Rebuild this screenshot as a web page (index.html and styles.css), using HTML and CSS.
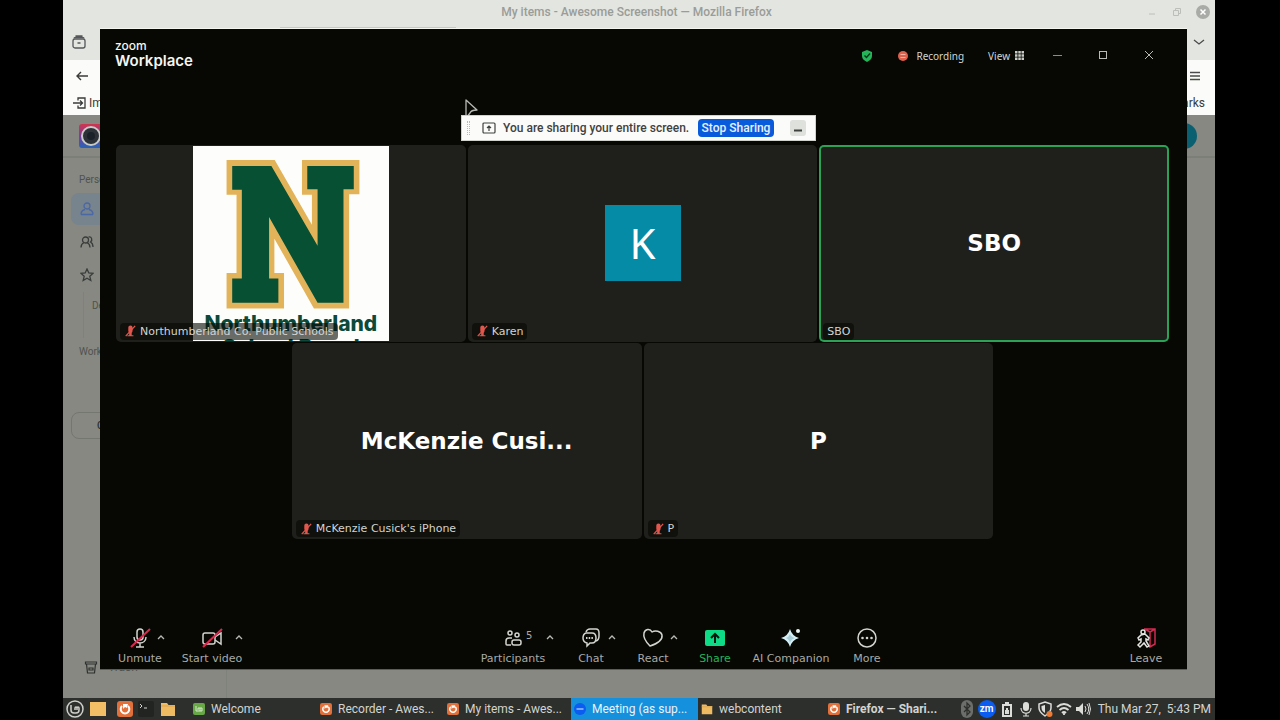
FILE: index.html
```html
<!DOCTYPE html>
<html lang="en">

<head>
    <meta charset="UTF-8">
    <meta name="viewport" content="width=device-width, initial-scale=1.0">
    <title>Desktop</title>
    <link rel="stylesheet" href="styles.css">
</head>

<body>
    <!-- shared icons -->
    <svg class="defs" width="0" height="0">
        <symbol id="mic-off" viewBox="0 0 14 16">
            <path d="M5 4a2.500 2.500 0 0 1 5 0v4a2.500 2.500 0 0 1-5 0z M6 10h3v3h2v1H4v-1h2z" fill="#e0574d" />
            <path d="M2 14L13 2" stroke="#e0574d" stroke-width="1.500" />
        </symbol>
        <symbol id="chevron" viewBox="0 0 10 10">
            <path d="M2 7l3-3 3 3" fill="none" stroke="#b9bab6" stroke-width="1.300" />
        </symbol>
        <symbol id="firefox" viewBox="0 0 16 16">
            <rect width="16" height="16" rx="3" fill="#e2703a" />
            <path d="M5 5a4.300 4.300 0 1 0 6 0" fill="none" stroke="#fff" stroke-width="2" />
            <path d="M6 3l5 0-1 4-2-1-2 2z" fill="#fff" />
        </symbol>
        <symbol id="folder" viewBox="0 0 16 16">
            <path d="M1 2h6l1.500 2H15v11H1z" fill="#eebb62" />
            <path d="M1 5h14" stroke="#d9a34c" />
        </symbol>
    </svg>

    <div class="desktop">
        <!-- browser behind the meeting -->
        <div class="browser">
            <div class="titlebar">
                <span class="title">My items - Awesome Screenshot — Mozilla Firefox</span>
                <div class="winbtns">
                    <svg width="12" height="12" viewBox="0 0 12 12"><path d="M3 8h6" stroke="#bcbeba" /></svg>
                    <svg width="12" height="12" viewBox="0 0 12 12"><path d="M2.500 4.500h5v5h-5zM4.500 4V2.500h5v5H8" fill="none" stroke="#bcbeba" /></svg>
                    <svg width="14" height="14" viewBox="0 0 14 14"><circle cx="7" cy="7" r="7" fill="#a9aba7" /><path d="M4.500 4.500l5 5m0-5l-5 5" stroke="#fff" stroke-width="1.500" /></svg>
                </div>
            </div>
            <div class="tabstrip">
                <svg width="16" height="16" viewBox="0 0 16 16" fill="none" stroke="#55575a" stroke-width="1.300"><rect x="2" y="5" width="12" height="9" rx="2" /><path d="M3 4.500c0-1 .5-1 1.500-1h7c1 0 1.500 0 1.500 1M4.500 2h7M6.500 9h3" /></svg>
                <div class="tab"></div>
                <svg class="end" width="12" height="12" viewBox="0 0 12 12"><path d="M1 4l5 4 5-4" fill="none" stroke="#4a4b4a" stroke-width="1.300" /></svg>
            </div>
            <div class="navbar">
                <svg width="14" height="14" viewBox="0 0 14 14"><path d="M13 7H2m4-4L2 7l4 4" fill="none" stroke="#3a3b3a" stroke-width="1.400" /></svg>
                <svg class="end" width="12" height="12" viewBox="0 0 12 12"><path d="M1 2.500h10M1 6h10M1 9.500h10" stroke="#4a4b4a" stroke-width="1.300" /></svg>
            </div>
            <div class="bookmarks">
                <svg width="14" height="12" viewBox="0 0 14 12"><path d="M5 3.500V1h7v10H5V8.500M0 6h9M7 3.500L9.500 6 7 8.500" fill="none" stroke="#3a3b3a" stroke-width="1.300" /></svg>
                <span>Import bookmarks</span>
                <span class="end">Other Bookmarks</span>
            </div>
            <div class="page">
                <div class="page-head">
                    <svg width="24" height="24" viewBox="0 0 24 24">
                        <defs>
                            <linearGradient id="lens" x1="0" y1="0" x2="0" y2="1"><stop offset="0" stop-color="#d0354f" /><stop offset=".5" stop-color="#7a3d9d" /><stop offset="1" stop-color="#2466b8" /></linearGradient>
                        </defs>
                        <rect width="24" height="24" rx="3" fill="url(#lens)" />
                        <circle cx="12" cy="12" r="9" fill="#2c3238" stroke="#c9cbc8" stroke-width="2" />
                        <circle cx="12" cy="12" r="4" fill="#1b2129" />
                    </svg>
                    <span class="account"></span>
                </div>
                <div class="sidebar">
                    <p class="group">Personal</p>
                    <a class="item active" href="#" aria-label="My items"><svg width="14" height="14" viewBox="0 0 14 14" fill="none" stroke="#4a68a5" stroke-width="1.300"><circle cx="7" cy="4" r="3" /><path d="M1 12.500c0-3 2-4.500 4-5M13 12.500c0-3-2-4.500-4-5M1 12.500h12" /></svg></a>
                    <a class="item" href="#" aria-label="Shared"><svg width="14" height="14" viewBox="0 0 14 14" fill="none" stroke="#3a3c3b" stroke-width="1.300"><circle cx="5.500" cy="5" r="3" /><path d="M1 12.500c0-2.500 1-4 3-5M10 12.500c0-2.500-1-4-3-5M8.500 2c3-1 4.500 3 2 5 2 1 2.500 3 2.500 5" /></svg></a>
                    <a class="item" href="#" aria-label="Starred"><svg width="14" height="14" viewBox="0 0 14 14" fill="none" stroke="#3a3c3b" stroke-width="1.300"><path d="M7 1l1.800 4 4.200.4-3.200 2.900 1 4.200L7 10.300l-3.800 2.200 1-4.200L1 5.400 5.200 5z" /></svg></a>
                    <p class="drop">Default</p>
                    <p class="group">Workspace</p>
                    <button class="create" type="button">Create</button>
                    <div class="trash">
                        <svg width="14" height="14" viewBox="0 0 14 14" fill="none" stroke="#2f3130" stroke-width="1.200"><path d="M1.500 2h11v2h-11zM2.500 4l1 9h7l1-9M5 8h4v2H5z" /></svg>
                        <span>Trash</span>
                    </div>
                </div>
            </div>
        </div>

        <!-- mouse pointer -->
        <svg class="pointer" width="16" height="22" viewBox="0 0 16 22"><path d="M2 1l11 10q-6 0-7 3l-4 5z" fill="#070803" stroke="#b8bab6" stroke-width="1.300" stroke-linejoin="round" /></svg>

        <!-- meeting window -->
        <main class="meeting">
            <header class="meeting-head">
                <div class="brand"><span class="brand-zoom">zoom</span><span class="brand-name">Workplace</span></div>
                <div class="status">
                    <svg width="12" height="14" viewBox="0 0 12 14"><path d="M6 1l5 2v4c0 3-2 4.500-5 6-3-1.500-5-3-5-6V3z" fill="#24b558" /><path d="M3.500 6.500l2 2 3.500-4" fill="none" stroke="#07351a" stroke-width="1.400" /></svg>
                    <span class="rec"><svg width="12" height="12" viewBox="0 0 12 12"><circle cx="6" cy="6" r="5" fill="#e0604c" /><path d="M3.500 4.500h5M3.500 7.500h5" stroke="#f4b2a6" /></svg>Recording</span>
                    <button class="view" type="button">View<svg width="9" height="9" viewBox="0 0 9 9" fill="#c9cac6"><path d="M0 0h2.500v2.500H0zM3.300 0h2.500v2.500H3.300zM6.500 0H9v2.500H6.500zM0 3.300h2.500v2.500H0zM3.300 3.300h2.500v2.500H3.300zM6.500 3.300H9v2.500H6.500zM0 6.500h2.500V9H0zM3.300 6.500h2.500V9H3.300zM6.500 6.500H9V9H6.500z" /></svg></button>
                </div>
                <div class="controls">
                    <button type="button" aria-label="Minimize"><svg width="10" height="10" viewBox="0 0 10 10"><path d="M1 5.500h9" stroke="#8b8c88" /></svg></button>
                    <button type="button" aria-label="Maximize"><svg width="10" height="10" viewBox="0 0 10 10"><rect x="1.500" y="1.500" width="7" height="7" fill="none" stroke="#b9bab6" /></svg></button>
                    <button type="button" aria-label="Close"><svg width="10" height="10" viewBox="0 0 10 10"><path d="M1 1l8 8m0-8L1 9" stroke="#b9bab6" /></svg></button>
                </div>
            </header>

            <section class="gallery">
                <div class="tile">
                    <div class="photo">
                        <svg class="emblem" viewBox="399 18 590 500">
                            <path fill="#e3b35a" d="M500 60H645L757 255V165H727V60H900V163H869V507H763L644 297V400H673V507H500V400H530V165H500z" />
                            <path fill="#075034" d="M517 78H635L774 318V148H743V78H883V148H852V490H774L628 232V417H656V490H517V417H546V150H517z" />
                        </svg>
                        <p class="school">Northumberland School Board</p>
                    </div>
                    <span class="label"><svg width="12" height="14"><use href="#mic-off" /></svg>Northumberland Co. Public Schools</span>
                </div>
                <div class="tile">
                    <div class="avatar">K</div>
                    <span class="label"><svg width="12" height="14"><use href="#mic-off" /></svg>Karen</span>
                </div>
                <div class="tile speaking">
                    <span class="name">SBO</span>
                    <span class="label">SBO</span>
                </div>
                <div class="tile">
                    <span class="name">McKenzie Cusi...</span>
                    <span class="label"><svg width="12" height="14"><use href="#mic-off" /></svg>McKenzie Cusick's iPhone</span>
                </div>
                <div class="tile">
                    <span class="name">P</span>
                    <span class="label"><svg width="12" height="14"><use href="#mic-off" /></svg>P</span>
                </div>
            </section>

            <footer class="toolbar">
                <div class="tools spaced">
                    <div class="tool">
                        <button class="tool-main" type="button">
                            <svg width="24" height="24" viewBox="0 0 24 24" fill="none" stroke="#d3d4d0" stroke-width="1.500"><rect x="9" y="3" width="6" height="11" rx="3" /><path d="M6 11c0 8 12 8 12 0M12 17v4M8 21h8" /><path d="M3 21L22 3" stroke="#e0284f" stroke-width="2" /></svg>
                            Unmute
                        </button>
                        <button class="more" type="button" aria-label="Audio options"><svg width="10" height="10"><use href="#chevron" /></svg></button>
                    </div>
                    <div class="tool medium">
                        <button class="tool-main" type="button">
                            <svg width="24" height="24" viewBox="0 0 24 24" fill="none" stroke="#d3d4d0" stroke-width="1.500"><rect x="3" y="7" width="12" height="11" rx="2" /><path d="M15 11l6-4v11l-6-4" /><path d="M3 21L22 3" stroke="#e0284f" stroke-width="2" /></svg>
                            Start video
                        </button>
                        <button class="more" type="button" aria-label="Video options"><svg width="10" height="10"><use href="#chevron" /></svg></button>
                    </div>
                </div>
                <div class="tools">
                    <div class="tool wide">
                        <button class="tool-main" type="button">
                            <svg width="24" height="24" viewBox="0 0 24 24" fill="none" stroke="#d3d4d0" stroke-width="1.500"><circle cx="9" cy="7" r="2" /><circle cx="16" cy="9" r="2" /><path d="M10 19H6q-1 0-1-1v-3q0-3 3-3h3" /><rect x="11" y="14" width="9" height="5" rx="2" /></svg>
                            Participants
                        </button>
                        <span class="count">5</span>
                        <button class="more" type="button" aria-label="Participant options"><svg width="10" height="10"><use href="#chevron" /></svg></button>
                    </div>
                    <div class="tool">
                        <button class="tool-main" type="button">
                            <svg width="24" height="24" viewBox="0 0 24 24" fill="none" stroke="#d3d4d0" stroke-width="1.500"><path d="M7 6q1-3 4-3h6q3 0 3 4v3q0 4-3 5" /><path d="M7 7h6q4 0 4 5t-4 5h-2l-3 3v-3q-4-1-4-5t3-5z" /><path d="M7 12h1.500m1.200 0h1.500m1.200 0h1.500" stroke-width="2" /></svg>
                            Chat
                        </button>
                        <button class="more" type="button" aria-label="Chat options"><svg width="10" height="10"><use href="#chevron" /></svg></button>
                    </div>
                    <div class="tool">
                        <button class="tool-main" type="button">
                            <svg width="24" height="24" viewBox="0 0 24 24" fill="none" stroke="#d3d4d0" stroke-width="1.500"><path d="M9 20C5 16 2 11 3 7c1-4 6-5 8-1 3-2 9-1 10 3 1 6-6 9-12 11z" stroke-linejoin="round" /></svg>
                            React
                        </button>
                        <button class="more" type="button" aria-label="Reactions"><svg width="10" height="10"><use href="#chevron" /></svg></button>
                    </div>
                    <div class="tool">
                        <button class="tool-main share" type="button">
                            <svg width="24" height="24" viewBox="0 0 24 24"><rect x="2" y="4" width="20" height="16" rx="2" fill="#0ddb85" /><path d="M12 17V8m-4 4l4-4 4 4" fill="none" stroke="#06170e" stroke-width="2" /></svg>
                            Share
                        </button>
                    </div>
                    <div class="tool large">
                        <button class="tool-main" type="button">
                            <svg width="24" height="24" viewBox="0 0 24 24"><path d="M11 3q2 7 9 9-7 2-9 9-2-7-9-9 7-2 9-9z" fill="#d4eef4" /><path d="M11 8q1 3 5 4-4 1-5 5-1-4-4-5 3-1 4-4z" fill="#a5ccd6" /><circle cx="19" cy="5" r="2" fill="#e8f4f4" /></svg>
                            AI Companion
                        </button>
                    </div>
                    <div class="tool">
                        <button class="tool-main" type="button">
                            <svg width="24" height="24" viewBox="0 0 24 24"><circle cx="12" cy="12" r="9" fill="none" stroke="#d3d4d0" stroke-width="1.500" /><g fill="#d3d4d0"><circle cx="7.500" cy="12" r="1.300" /><circle cx="12" cy="12" r="1.300" /><circle cx="16.500" cy="12" r="1.300" /></g></svg>
                            More
                        </button>
                    </div>
                </div>
                <div class="tool">
                    <button class="tool-main" type="button">
                        <svg width="24" height="24" viewBox="0 0 24 24" fill="none"><path d="M10 3h11v15l-5 3V6l5-3M16 6l-5-3" stroke="#d42a52" stroke-width="1.500" /><g stroke="#e4e5e1" stroke-width="1.500"><circle cx="9" cy="6" r="2" /><path d="M7 9l-3 3 1 2 2-1v3l-3 3 2 2 4-4 3 4 2-1-3-5v-2l2 1 1-2-4-4z" /></g></svg>
                        Leave
                    </button>
                </div>
            </footer>
        </main>

        <!-- screen sharing bar -->
        <div class="sharebar">
            <span class="grip"></span>
            <svg width="14" height="12" viewBox="0 0 14 12" fill="none" stroke="#3f413f" stroke-width="1.200"><rect x="1" y="1" width="12" height="10" rx="1" /><path d="M7 9V4M5 6l2-2 2 2" /></svg>
            <span>You are sharing your entire screen.</span>
            <button class="stop" type="button">Stop Sharing</button>
            <button class="hide" type="button" aria-label="Minimize"><svg width="8" height="8" viewBox="0 0 8 8"><path d="M0 6.500h8" stroke="#3f413f" stroke-width="2" /></svg></button>
        </div>

        <!-- bottom panel -->
        <nav class="panel">
            <div class="launchers">
                <svg width="18" height="18" viewBox="0 0 18 18" fill="none" stroke="#cfd0cc"><circle cx="9" cy="9" r="8" stroke-width="1.500" /><path d="M5 5v5q0 3 3 3h2q3 0 3-3V8q0-1-1-1t-1 1v2M11 8q0-1-1-1T9 8v2" stroke-width="1.500" /></svg>
                <svg width="18" height="18" viewBox="0 0 18 18"><rect x="1" y="2" width="16" height="14" fill="#f2bf66" /></svg>
                <svg class="after" width="16" height="16"><use href="#firefox" /></svg>
                <svg width="16" height="16" viewBox="0 0 16 16"><rect width="16" height="16" rx="2" fill="#222421" /><path d="M2 3l2 2-2 2M6 7h3" fill="none" stroke="#d3d4d0" /></svg>
                <svg width="18" height="16"><use href="#folder" /></svg>
            </div>
            <div class="tasks">
                <a href="#"><svg width="12" height="12" viewBox="0 0 12 12"><rect width="12" height="12" rx="2" fill="#69a847" /><path d="M3 3v5h6V5H5v2m2-2v3" fill="none" stroke="#d8eccb" /></svg><span>Welcome</span></a>
                <a href="#"><svg width="12" height="12"><use href="#firefox" /></svg><span>Recorder - Awes...</span></a>
                <a href="#"><svg width="12" height="12"><use href="#firefox" /></svg><span>My items - Awes...</span></a>
                <a class="current" href="#"><svg width="12" height="12" viewBox="0 0 12 12"><circle cx="6" cy="6" r="6" fill="#0b5cf0" /><path d="M2.500 6h7" stroke="#9cc2ff" stroke-width="1.500" /></svg><span>Meeting (as sup...</span></a>
                <a href="#"><svg width="12" height="12"><use href="#folder" /></svg><span>webcontent</span></a>
                <a class="alert" href="#"><svg width="12" height="12"><use href="#firefox" /></svg><span>Firefox — Shari...</span></a>
            </div>
            <div class="tray">
                <svg width="16" height="18" viewBox="0 0 16 18"><rect x="2" y="0" width="12" height="18" rx="6" fill="#6c6e6b" /><path d="M5 6l6 6-3 3V3l3 3-6 6" fill="none" stroke="#2d2f2c" stroke-width="1.300" /></svg>
                <span class="zm">zm</span>
                <svg width="16" height="18" viewBox="0 0 16 18"><path d="M6 2h4v2h3v13H3V4h3z" fill="#dcddd9" /><path d="M5 6h6v9H5z" fill="#2d2f2c" /><path d="M6 10h4v4H6zM7 8h2v2H7z" fill="#dcddd9" /></svg>
                <svg width="16" height="18" viewBox="0 0 16 18"><rect x="5" y="2" width="6" height="9" rx="3" fill="#dcddd9" /><path d="M3 8c0 7 10 7 10 0M8 13v3M5 16h6" fill="none" stroke="#dcddd9" stroke-width="1.200" /></svg>
                <svg width="16" height="18" viewBox="0 0 16 18"><path d="M8 2l6 2v4c0 4-3 6-6 8-3-2-6-4-6-8V4z" fill="#2d2f2c" stroke="#dcddd9" stroke-width="1.500" /><path d="M8 5v8c-2-1-3.500-3-3.500-5V6z" fill="#dcddd9" /><circle cx="12.500" cy="14" r="3" fill="#ee7a33" /></svg>
                <svg width="16" height="18" viewBox="0 0 16 18" fill="none" stroke="#dcddd9" stroke-width="1.800"><path d="M1 7q7-6 14 0M3.500 10q4.500-4 9 0M6 13q2-2 4 0" /><path d="M8 13v2" /></svg>
                <svg width="16" height="18" viewBox="0 0 16 18"><path d="M1 7h3l4-4v12l-4-4H1z" fill="#dcddd9" /><path d="M10 6q2 3 0 6M12 4q3.500 5 0 10M14 3q3 6 0 12" fill="none" stroke="#dcddd9" /></svg>
                <span class="clock">Thu Mar 27, &nbsp;5:43 PM</span>
            </div>
        </nav>
    </div>
</body>

</html>
```
FILE: styles.css
```css
* {
    box-sizing: border-box;
}

body {
    margin: 0;
    background: #000;
    font-family: "DejaVu Sans", sans-serif;
    font-size: 11px;
}

p {
    margin: 0;
}

svg {
    flex: none;
}

button {
    padding: 0;
    border: 0;
    background: none;
    color: inherit;
    font: inherit;
}

a {
    color: inherit;
    text-decoration: none;
}

.defs {
    position: absolute;
}

.desktop {
    position: relative;
    display: flex;
    flex-direction: column;
    min-height: 100vh;
    margin: 0 65px 0 63px;
    overflow: hidden;
}

/* browser */
.browser {
    flex: 1;
    display: flex;
    flex-direction: column;
    background: #e3e5e0;
    font-family: Roboto, sans-serif;
    font-size: 12px;
    color: #3a3b3a;
}

.titlebar {
    display: grid;
    grid-template-columns: 1fr auto 1fr;
    align-items: center;
    height: 24px;
    padding-right: 5px;
}

.title {
    grid-column: 2;
    color: #9a9c98;
    font-weight: 500;
}

.winbtns {
    display: flex;
    align-items: center;
    justify-content: flex-end;
    gap: 13px;
}

.tabstrip,
.navbar,
.bookmarks {
    display: flex;
    align-items: center;
}

.tabstrip {
    height: 36px;
    padding: 0 10px 0 8px;
}

.tab {
    align-self: flex-start;
    width: 176px;
    height: 32px;
    margin: 3px 0 0 193px;
    border-top: 1px solid #c6c8c3;
    background: #fbfcf9;
}

.end {
    margin-left: auto;
}

.navbar {
    height: 31px;
    padding: 0 14px 0 12px;
    background: #fbfcf9;
}

.bookmarks {
    height: 24px;
    gap: 2px;
    padding: 0 10px 0 10px;
    background: #fbfcf9;
}

.page {
    flex: 1;
    display: flex;
    flex-direction: column;
    background: #868881;
    font-size: 10px;
    color: #50524f;
}

.page-head {
    display: flex;
    align-items: center;
    justify-content: space-between;
    height: 43px;
    padding: 0 18px 0 16px;
    border-bottom: 2px solid #7c7e78;
}

.account {
    width: 26px;
    height: 26px;
    border-radius: 50%;
    background: #0a5f70;
}

.sidebar {
    flex: 1;
    display: flex;
    flex-direction: column;
    width: 164px;
    padding: 12px 0 24px 8px;
    border-right: 1px solid #7f817b;
}

.group {
    padding-left: 8px;
    line-height: 20px;
}

.item {
    display: flex;
    align-items: center;
    height: 32px;
    margin-bottom: 1px;
    padding-left: 9px;
}

.item.active {
    margin-top: 3px;
    border-radius: 8px;
    background: #77838d;
}

.drop {
    height: 46px;
    margin: 0 0 4px 12px;
    padding-left: 8px;
    border-left: 1px solid #7f817b;
    line-height: 28px;
}

.create {
    height: 27px;
    margin-top: 50px;
    border: 1px solid #747670;
    border-radius: 8px;
    padding-left: 25px;
    text-align: left;
    color: #2f3130;
    font-weight: 500;
}

.trash {
    display: flex;
    align-items: center;
    gap: 10px;
    margin-top: auto;
    padding-left: 13px;
    font-size: 12px;
}

.pointer {
    position: absolute;
    z-index: 2;
    left: 401px;
    top: 99px;
}

/* meeting window */
.meeting {
    position: absolute;
    top: 29px;
    right: 28px;
    bottom: 50px;
    left: 37px;
    display: flex;
    flex-direction: column;
    border-bottom: 1px solid #5b5d58;
    background: #070803;
    box-shadow: 0 -1px #f4f5f1;
    color: #d3d4d0;
}

.meeting-head {
    display: flex;
    align-items: center;
    height: 53px;
    padding: 0 23px 0 15px;
    font-family: "Noto Sans", sans-serif;
    font-size: 10px;
}

.brand {
    display: flex;
    flex-direction: column;
    padding-bottom: 5px;
    color: #f4f5f1;
    font-family: Inter, sans-serif;
    font-weight: 600;
    line-height: 15px;
}

.brand-zoom {
    font-size: 12px;
    font-weight: 500;
}

.brand-name {
    font-size: 15px;
}

.status {
    display: flex;
    align-items: center;
    gap: 24px;
    margin-left: auto;
}

.rec {
    display: flex;
    align-items: center;
    gap: 7px;
}

.view {
    display: flex;
    align-items: center;
    gap: 5px;
}

.controls {
    display: flex;
    gap: 16px;
    margin-left: 18px;
}

.controls button {
    width: 30px;
}

.gallery {
    flex: 1;
    display: flex;
    flex-wrap: wrap;
    align-content: center;
    justify-content: center;
    gap: 1px 2px;
    padding: 0 18px 0 16px;
}

.tile {
    position: relative;
    display: flex;
    align-items: center;
    justify-content: center;
    width: calc((100% - 4px) / 3);
    aspect-ratio: 16 / 9;
    overflow: hidden;
    border-radius: 5px;
    background: #1f201c;
}

.tile.speaking {
    box-shadow: inset 0 0 0 2px #2aa356;
}

.name {
    color: #fff;
    font-size: 23px;
    font-weight: bold;
}

.label {
    position: absolute;
    left: 4px;
    bottom: 2px;
    display: flex;
    align-items: center;
    gap: 4px;
    height: 17px;
    padding: 0 4px;
    border-radius: 4px;
    background: rgba(7, 8, 3, 0.6);
}

.photo {
    align-self: stretch;
    width: 196px;
    margin: 1px 0;
    overflow: hidden;
    background: #fdfefb;
}

.emblem {
    display: block;
    width: 100%;
}

.school {
    color: #0b4a3a;
    font-family: Inter, sans-serif;
    font-size: 21px;
    font-weight: 800;
    line-height: 24px;
    text-align: center;
}

.avatar {
    width: 76px;
    height: 76px;
    background: #058ba6;
    color: #fff;
    font-family: "Noto Sans", sans-serif;
    font-size: 42px;
    line-height: 76px;
    text-align: center;
}

/* toolbar */
.toolbar {
    display: flex;
    justify-content: space-between;
    padding: 24px 11px 3px 10px;
}

.tools {
    display: flex;
    gap: 2px;
}

.tools.spaced {
    gap: 6px;
}

.tool {
    position: relative;
    width: 60px;
    color: #a9aaa6;
}

.tool.medium {
    width: 72px;
}

.tool.large {
    width: 88px;
}

.tool.wide {
    width: 92px;
}

.tool-main {
    display: flex;
    flex-direction: column;
    align-items: center;
    gap: 2px;
    width: 100%;
    line-height: 14px;
    white-space: nowrap;
}

.share {
    color: #25b35c;
}

.more {
    position: absolute;
    top: 6px;
    right: 4px;
    height: 10px;
    line-height: 0;
}

.count {
    position: absolute;
    top: 4px;
    left: 59px;
    font-size: 10px;
}

/* sharing bar */
.sharebar {
    position: absolute;
    z-index: 3;
    top: 115px;
    left: 398px;
    display: flex;
    align-items: center;
    width: 355px;
    height: 26px;
    padding: 0 9px 0 5px;
    border: 1px solid #d0d2ce;
    background: #fbfcf9;
    color: #3f413f;
    font-family: Roboto, sans-serif;
    font-size: 12px;
    font-weight: 500;
    white-space: nowrap;
}

.sharebar svg {
    margin-right: 7px;
}

.grip {
    width: 3px;
    height: 14px;
    margin-right: 12px;
    border: dotted #b9bbb7;
    border-width: 0 1px;
}

.stop {
    width: 76px;
    height: 18px;
    margin-left: auto;
    border-radius: 4px;
    background: #0a5bdb;
    color: #e8f0fc;
}

.hide {
    display: flex;
    align-items: center;
    justify-content: center;
    width: 16px;
    height: 16px;
    margin-left: 16px;
    border-radius: 3px;
    background: #dfe1dd;
}

.sharebar .hide svg {
    margin: 0;
}

/* panel */
.panel {
    display: flex;
    height: 22px;
    background: #2d2f2c;
    color: #d3d4d0;
    font-family: Roboto, sans-serif;
    font-size: 12px;
    white-space: nowrap;
}

.launchers,
.tray {
    display: flex;
    align-items: center;
}

.launchers {
    width: 127px;
    gap: 5px;
    padding-left: 3px;
}

.launchers .after {
    margin-left: 5px;
}

.tasks {
    flex: 1;
    display: grid;
    grid-template-columns: repeat(6, 1fr);
}

.tasks a {
    display: flex;
    align-items: center;
    gap: 6px;
    padding-left: 3px;
}

.tasks .current {
    background: #1590dc;
    color: #e8f3fb;
}

.tasks .alert {
    font-weight: bold;
}

.tray {
    justify-content: flex-end;
    width: 263px;
    gap: 3px;
    padding-right: 4px;
}

.zm {
    width: 18px;
    height: 18px;
    border-radius: 50%;
    background: #0b5cf0;
    color: #fff;
    font-size: 10px;
    font-weight: 600;
    line-height: 17px;
    text-align: center;
}

.clock {
    margin-left: 4px;
}
```
